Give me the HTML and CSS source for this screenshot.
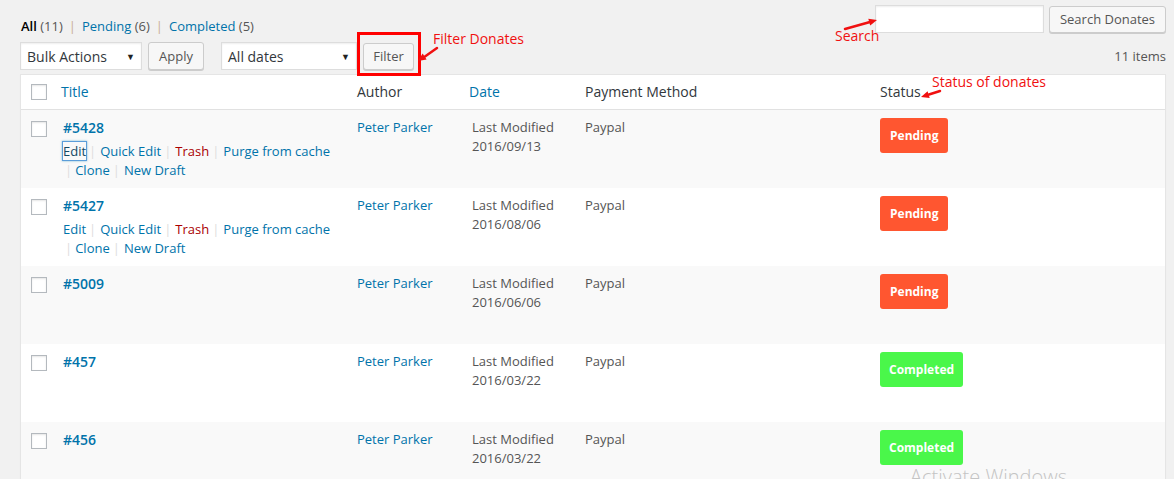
FILE: index.html
```html
<!DOCTYPE html>
<html>
<head>
<meta charset="utf-8">
<title>Donates</title>
<link rel="stylesheet" href="styles.css">
</head>
<body>
<div class="wrap">
  <div class="top-row">
    <ul class="subsubsub">
      <li><span class="current">All</span> <span class="count">(11)</span><span class="sep">|</span></li>
      <li><a>Pending</a> <span class="count">(6)</span><span class="sep">|</span></li>
      <li><a>Completed</a> <span class="count">(5)</span></li>
    </ul>
    <div class="search-box">
      <div class="search-input"></div>
      <div class="btn btn-search">Search Donates</div>
    </div>
  </div>

  <div class="tablenav">
    <div class="actions">
      <div class="select select-bulk"><span>Bulk Actions</span><span class="caret">▼</span></div>
      <div class="btn btn-apply">Apply</div>
      <div class="select select-dates"><span>All dates</span><span class="caret">▼</span></div>
      <div class="filter-wrap">
        <div class="btn btn-filter">Filter</div>
        <div class="redbox"></div>
      </div>
    </div>
    <div class="items">11 items</div>
  </div>

  <div class="table">
    <div class="row head">
      <div class="cell cb"><span class="checkbox"></span></div>
      <div class="cell"><a class="sort">Title</a></div>
      <div class="cell">Author</div>
      <div class="cell"><a class="sort">Date</a></div>
      <div class="cell">Payment Method</div>
      <div class="cell">Status</div>
    </div>

    <div class="row alt">
      <div class="cell cb"><span class="checkbox"></span></div>
      <div class="cell title">
        <a class="row-title">#5428</a>
        <div class="row-actions">
          <div><a class="focus">Edit</a><span class="rsep">|</span><a>Quick Edit</a><span class="rsep">|</span><a class="trash">Trash</a><span class="rsep">|</span><a>Purge from cache</a></div>
          <div class="second"><span class="rsep first">|</span><a>Clone</a><span class="rsep">|</span><a>New Draft</a></div>
        </div>
      </div>
      <div class="cell"><a>Peter Parker</a></div>
      <div class="cell date">Last Modified<br>2016/09/13</div>
      <div class="cell">Paypal</div>
      <div class="cell status"><span class="badge pending">Pending</span></div>
    </div>

    <div class="row">
      <div class="cell cb"><span class="checkbox"></span></div>
      <div class="cell title">
        <a class="row-title">#5427</a>
        <div class="row-actions">
          <div><a>Edit</a><span class="rsep">|</span><a>Quick Edit</a><span class="rsep">|</span><a class="trash">Trash</a><span class="rsep">|</span><a>Purge from cache</a></div>
          <div class="second"><span class="rsep first">|</span><a>Clone</a><span class="rsep">|</span><a>New Draft</a></div>
        </div>
      </div>
      <div class="cell"><a>Peter Parker</a></div>
      <div class="cell date">Last Modified<br>2016/08/06</div>
      <div class="cell">Paypal</div>
      <div class="cell status"><span class="badge pending">Pending</span></div>
    </div>

    <div class="row alt">
      <div class="cell cb"><span class="checkbox"></span></div>
      <div class="cell title"><a class="row-title">#5009</a></div>
      <div class="cell"><a>Peter Parker</a></div>
      <div class="cell date">Last Modified<br>2016/06/06</div>
      <div class="cell">Paypal</div>
      <div class="cell status"><span class="badge pending">Pending</span></div>
    </div>

    <div class="row">
      <div class="cell cb"><span class="checkbox"></span></div>
      <div class="cell title"><a class="row-title">#457</a></div>
      <div class="cell"><a>Peter Parker</a></div>
      <div class="cell date">Last Modified<br>2016/03/22</div>
      <div class="cell">Paypal</div>
      <div class="cell status"><span class="badge completed">Completed</span></div>
    </div>

    <div class="row alt">
      <div class="cell cb"><span class="checkbox"></span></div>
      <div class="cell title"><a class="row-title">#456</a></div>
      <div class="cell"><a>Peter Parker</a></div>
      <div class="cell date">Last Modified<br>2016/03/22</div>
      <div class="cell">Paypal</div>
      <div class="cell status"><span class="badge completed">Completed</span></div>
    </div>
  </div>
</div>

<div class="note note-filter">Filter Donates</div>
<div class="note note-search">Search</div>
<div class="note note-status">Status of donates</div>
<svg class="arrows" width="1174" height="479" viewBox="0 0 1174 479">
  <g stroke="#f01010" stroke-width="2.5" stroke-linecap="round" fill="none">
    <line x1="437" y1="48" x2="425" y2="56.5"/>
    <line x1="845" y1="29" x2="870" y2="22"/>
    <line x1="940" y1="91" x2="929" y2="94.5"/>
  </g>
  <g fill="#f01010">
    <polygon points="418,61 426.6,59.4 422.6,53.6"/>
    <polygon points="877,20 870.2,25.6 868.3,18.8"/>
    <polygon points="921,97 929.7,97.9 927.6,91.3"/>
  </g>
</svg>
<div class="watermark">Activate Windows</div>
</body>
</html>
```

FILE: styles.css
```css
html, body {
  margin: 0;
  padding: 0;
  overflow: hidden;
}
body {
  position: relative;
  width: 1174px;
  height: 479px;
  background: #f1f1f1;
  font-family: "Open Sans", "Liberation Sans", sans-serif;
  font-size: 13px;
  color: #555;
}
a {
  color: #0073aa;
  text-decoration: none;
}
.wrap {
  padding: 0 8px 0 20px;
}

/* top row */
.top-row {
  display: flex;
  justify-content: space-between;
  padding-top: 5px;
  height: 28px;
}
.subsubsub {
  list-style: none;
  margin: 0 0 -3px 1px;
  padding: 0;
  display: flex;
  align-self: flex-end;
  line-height: 20px;
  font-size: 13px;
  color: #666;
}
.subsubsub .current {
  color: #000;
  font-weight: 600;
}
.subsubsub .count {
  color: #555;
}
.subsubsub .sep {
  color: #c9ae8f;
  margin: 0 6px 0 6px;
}
.search-box {
  display: flex;
  gap: 5px;
}
.search-input {
  width: 169px;
  height: 28px;
  box-sizing: border-box;
  background: #fff;
  border: 1px solid #ddd;
  box-shadow: inset 0 1px 2px rgba(0,0,0,.07);
}

/* buttons */
.btn {
  box-sizing: border-box;
  height: 28px;
  line-height: 26px;
  padding: 0 10px;
  background: #f7f7f7;
  border: 1px solid #ccc;
  border-radius: 3px;
  box-shadow: 0 1px 0 #ccc;
  color: #555;
  font-size: 13px;
  white-space: nowrap;
}
.btn-search {
  width: 117px;
  height: 27px;
  margin-top: 1px;
  line-height: 25px;
  text-align: center;
  padding: 0;
}
.btn-apply {
  width: 56px;
  text-align: center;
  padding: 0;
  margin-left: 6px;
}
.btn-filter {
  width: 51px;
  height: 27px;
  margin-top: 1px;
  line-height: 25px;
  text-align: center;
  padding: 0;
}

/* tablenav */
.tablenav {
  display: flex;
  justify-content: space-between;
  align-items: center;
  margin-top: 9px;
  height: 28px;
}
.actions {
  display: flex;
  align-items: flex-start;
}
.select {
  box-sizing: border-box;
  height: 28px;
  display: flex;
  justify-content: space-between;
  align-items: center;
  padding: 0 6px 0 6px;
  background: #fff;
  border: 1px solid #ddd;
  box-shadow: inset 0 1px 2px rgba(0,0,0,.07);
  color: #32373c;
  font-size: 14px;
}
.select .caret {
  font-size: 9px;
  color: #222;
}
.select-bulk {
  width: 122px;
}
.select-dates {
  width: 136px;
  margin-left: 17px;
}
.filter-wrap {
  position: relative;
  margin-left: 6px;
}
.redbox {
  position: absolute;
  left: -6px;
  top: -10px;
  width: 64px;
  height: 44px;
  box-sizing: border-box;
  border: 3px solid #f00;
}
.items {
  color: #555;
  font-size: 13px;
}

/* table */
.table {
  margin-top: 4px;
  background: #fff;
  border: 1px solid #e5e5e5;
  box-shadow: 0 1px 1px rgba(0,0,0,.04);
}
.row {
  display: grid;
  grid-template-columns: 32px 296px 112px 116px 295px 1fr;
  height: 78px;
  background: #fff;
}
.row.alt {
  background: #f9f9f9;
}
.row.head {
  height: 34px;
  border-bottom: 1px solid #e1e1e1;
  align-items: center;
}
.cell {
  padding: 8px 8px 0;
  line-height: 19px;
  font-size: 13px;
  color: #555;
}
.head .cell {
  padding: 0 8px;
  font-size: 14px;
  color: #32373c;
  line-height: 20px;
}
.head .sort {
  color: #0073aa;
}
.cell.cb {
  padding: 11px 0 0 10px;
}
.head .cell.cb {
  padding: 0 0 0 10px;
  display: flex;
  align-items: center;
}
.checkbox {
  display: block;
  width: 16px;
  height: 16px;
  box-sizing: border-box;
  border: 1px solid #b4b9be;
  background: #fff;
  box-shadow: inset 0 1px 2px rgba(0,0,0,.1);
}
.cell.title {
  padding-left: 10px;
}
.row-title {
  display: block;
  font-size: 14px;
  font-weight: 600;
  line-height: 20px;
}
.row-actions {
  padding-top: 4px;
  font-size: 13px;
  line-height: 19px;
  white-space: nowrap;
}
.row-actions .second {
  padding-left: 2px;
}
.rsep {
  color: #ddd;
  margin: 0 4px 0 3px;
}
.rsep.first {
  margin-left: 0;
  margin-right: 3px;
}
.trash {
  color: #a00;
}
.focus {
  color: #124964;
  box-shadow: 0 0 0 1px #5b9dd9, 0 0 2px 1px rgba(30,140,190,.6);
}
.cell.date {
  padding-left: 11px;
}
.cell.status {
  padding-top: 8px;
}
.badge {
  display: inline-block;
  height: 35px;
  line-height: 35px;
  padding: 0 10px;
  border-radius: 3px;
  color: #fff;
  font-size: 12px;
  font-weight: 700;
}
.badge.pending {
  background: #ff5630;
}
.badge.completed {
  background: #4af74a;
  padding: 0 9px;
}

/* annotations */
.note {
  position: absolute;
  color: #f01010;
  font-family: "Open Sans", "Liberation Sans", sans-serif;
  font-size: 14px;
  line-height: 18px;
  white-space: nowrap;
}
.note-filter {
  left: 433px;
  top: 30px;
}
.note-search {
  left: 835px;
  top: 27px;
}
.note-status {
  left: 932px;
  top: 73px;
}
.arrows {
  position: absolute;
  left: 0;
  top: 0;
  pointer-events: none;
}
.watermark {
  position: absolute;
  left: 910px;
  top: 463px;
  font-family: "Open Sans", "Liberation Sans", sans-serif;
  font-size: 20px;
  font-weight: 300;
  color: #c4c4c4;
  white-space: nowrap;
}
```
